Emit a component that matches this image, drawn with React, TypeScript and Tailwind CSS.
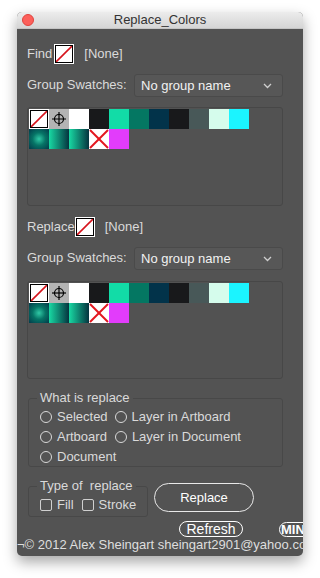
const font = { fontFamily: '"Liberation Sans", Arial, sans-serif' };

function NoneSwatch({ size = 20 }: { size?: number }) {
  return (
    <div className="border border-white bg-white" style={{ width: size, height: size }}>
      <svg viewBox="0 0 18 18" className="block h-full w-full border border-black bg-white">
        <line x1="0" y1="18" x2="18" y2="0" stroke="#d6141c" strokeWidth="1.8" />
      </svg>
    </div>
  );
}

function RegSwatch() {
  return (
    <div className="h-5 w-5 bg-[#b4b4b4]">
      <svg viewBox="0 0 20 20" className="block h-full w-full">
        <circle cx="10" cy="10" r="4.5" fill="none" stroke="#000" strokeWidth="1.2" />
        <line x1="3" y1="10" x2="17" y2="10" stroke="#000" strokeWidth="1.2" />
        <line x1="10" y1="3" x2="10" y2="17" stroke="#000" strokeWidth="1.2" />
      </svg>
    </div>
  );
}

function XSwatch() {
  return (
    <div className="h-5 w-5 bg-white">
      <svg viewBox="0 0 20 20" className="block h-full w-full">
        <line x1="1" y1="1" x2="19" y2="19" stroke="#e3161e" strokeWidth="2" />
        <line x1="19" y1="1" x2="1" y2="19" stroke="#e3161e" strokeWidth="2" />
      </svg>
    </div>
  );
}

function SwatchPanel({ height }: { height: number }) {
  return (
    <div
      className="relative rounded-[3px] border border-[#474747] bg-[#525252] pl-[1px] pt-[1px]"
      style={{ height }}
    >
      <div className="flex w-[220px] flex-wrap">
        <div className="h-5 w-5 border border-white">
          <svg viewBox="0 0 18 18" className="block h-full w-full border border-black bg-white">
            <line x1="0" y1="18" x2="18" y2="0" stroke="#d6141c" strokeWidth="1.8" />
          </svg>
        </div>
        <RegSwatch />
        <div className="h-5 w-5 bg-white" />
        <div className="h-5 w-5 bg-[#18191b]" />
        <div className="h-5 w-5 bg-[#12dca7]" />
        <div className="h-5 w-5 bg-[#047762]" />
        <div className="h-5 w-5 bg-[#02334a]" />
        <div className="h-5 w-5 bg-[#18191b]" />
        <div className="h-5 w-5 bg-[#485858]" />
        <div className="h-5 w-5 bg-[#d5fcec]" />
        <div className="h-5 w-5 bg-[#1bf4ff]" />
        <div className="h-5 w-5 bg-[radial-gradient(circle,#30c9a6_0%,#067466_45%,#033a4a_100%)]" />
        <div className="h-5 w-5 bg-[linear-gradient(90deg,#18d9a3,#05343f)]" />
        <div className="h-5 w-5 bg-[linear-gradient(90deg,#18d9a3,#05343f)]" />
        <XSwatch />
        <div className="h-5 w-5 bg-[#e23cfb]" />
      </div>
    </div>
  );
}

function Dropdown() {
  return (
    <div className="flex h-[23px] w-[149px] items-center justify-between rounded-[3px] border border-[#4a4a4a] bg-[#575757] pl-[6px] pr-[10px] text-[13px] text-[#f2f2f2]">
      <span>No group name</span>
      <svg width="9" height="6" viewBox="0 0 9 6">
        <polyline points="1,1 4.5,4.5 8,1" fill="none" stroke="#cfcfcf" strokeWidth="1.3" />
      </svg>
    </div>
  );
}

function Radio({ label }: { label: string }) {
  return (
    <div className="flex items-center gap-[5px]">
      <div className="h-[12px] w-[12px] rounded-full border border-[#d8d8d8]" />
      <span>{label}</span>
    </div>
  );
}

function Check({ label }: { label: string }) {
  return (
    <div className="flex items-center gap-[5px]">
      <div className="h-[12px] w-[12px] rounded-[2px] border border-[#d0d0d0]" />
      <span>{label}</span>
    </div>
  );
}

export default function App() {
  return (
    <div className="min-h-[578px] bg-white pl-[17px] pt-[12px]" style={font}>
      <div className="h-[544px] w-[286px] overflow-hidden rounded-t-[5px] rounded-b-[5px] bg-[#535353] shadow-[0_6px_14px_rgba(0,0,0,0.35)]">
        <div className="relative flex h-[17px] items-center justify-center border-b border-[#c4c4c4] bg-[linear-gradient(#ececec,#d5d5d5)] text-[13px] text-[#333]">
          <div className="absolute left-[5px] top-[2px] h-[12px] w-[12px] rounded-full border border-[#e0443e] bg-[#fc605b]" />
          Replace_Colors
        </div>

        <div className="pl-[10px] pr-[20px] text-[13px] text-[#dadada]">
          <div className="mt-[15px] flex h-5 items-center">
            <span>Find</span>
            <div className="ml-[2px]">
              <NoneSwatch />
            </div>
            <span className="ml-[10px]">[None]</span>
          </div>

          <div className="mt-[10px] flex items-start justify-between">
            <span className="mt-[1px]">Group Swatches:</span>
            <Dropdown />
          </div>

          <div className="mt-[10px]">
            <SwatchPanel height={99} />
          </div>

          <div className="mt-[11px] flex h-5 items-center">
            <span>Replace</span>
            <div className="ml-[0px]">
              <NoneSwatch />
            </div>
            <span className="ml-[10px]">[None]</span>
          </div>

          <div className="mt-[10px] flex items-start justify-between">
            <span className="mt-[1px]">Group Swatches:</span>
            <Dropdown />
          </div>

          <div className="mt-[11px]">
            <SwatchPanel height={98} />
          </div>

          <div className="relative ml-[1px] mt-[19px] h-[69px] rounded-[3px] border border-[#484848] pl-[11px] pt-[8px]">
            <span className="absolute left-[8px] top-[-9px] bg-[#535353] px-[3px] leading-[16px]">What is replace</span>
            <div className="flex h-5 items-center gap-[7px]">
              <Radio label="Selected" />
              <Radio label="Layer in Artboard" />
            </div>
            <div className="flex h-5 items-center gap-[8px]">
              <Radio label="Artboard" />
              <Radio label="Layer in Document" />
            </div>
            <div className="flex h-5 items-center">
              <Radio label="Document" />
            </div>
          </div>

          <div className="mt-[16px] flex items-start">
            <div className="relative ml-[1px] mt-[3px] flex h-[31px] w-[120px] items-center gap-[8px] rounded-[3px] border border-[#484848] pl-[11px] pt-[6px]">
              <span className="absolute left-[8px] top-[-9px] bg-[#535353] px-[3px] leading-[16px]">Type of&nbsp; replace</span>
              <Check label="Fill" />
              <Check label="Stroke" />
            </div>
            <button className="ml-[6px] flex h-[29px] w-[100px] items-center justify-center rounded-full border border-[#e8e8e8] text-[13px] text-white">
              Replace
            </button>
          </div>

          <div className="mt-[4px] flex items-center">
            <button className="ml-[152px] flex h-[16px] w-[64px] shrink-0 items-center justify-center rounded-full border border-white text-[14px] leading-none text-white">
              Refresh
            </button>
            <button className="ml-[36px] flex h-[15px] w-[32px] shrink-0 items-center justify-start rounded-full border border-white pl-[1px] text-[13px] font-bold leading-none text-white">
              MIN
            </button>
          </div>
        </div>

        <div className="whitespace-nowrap text-[13px] leading-[16px] text-[#dedede]">
          ¬© 2012 Alex Sheingart sheingart2901@yahoo.com
        </div>
      </div>
    </div>
  );
}
